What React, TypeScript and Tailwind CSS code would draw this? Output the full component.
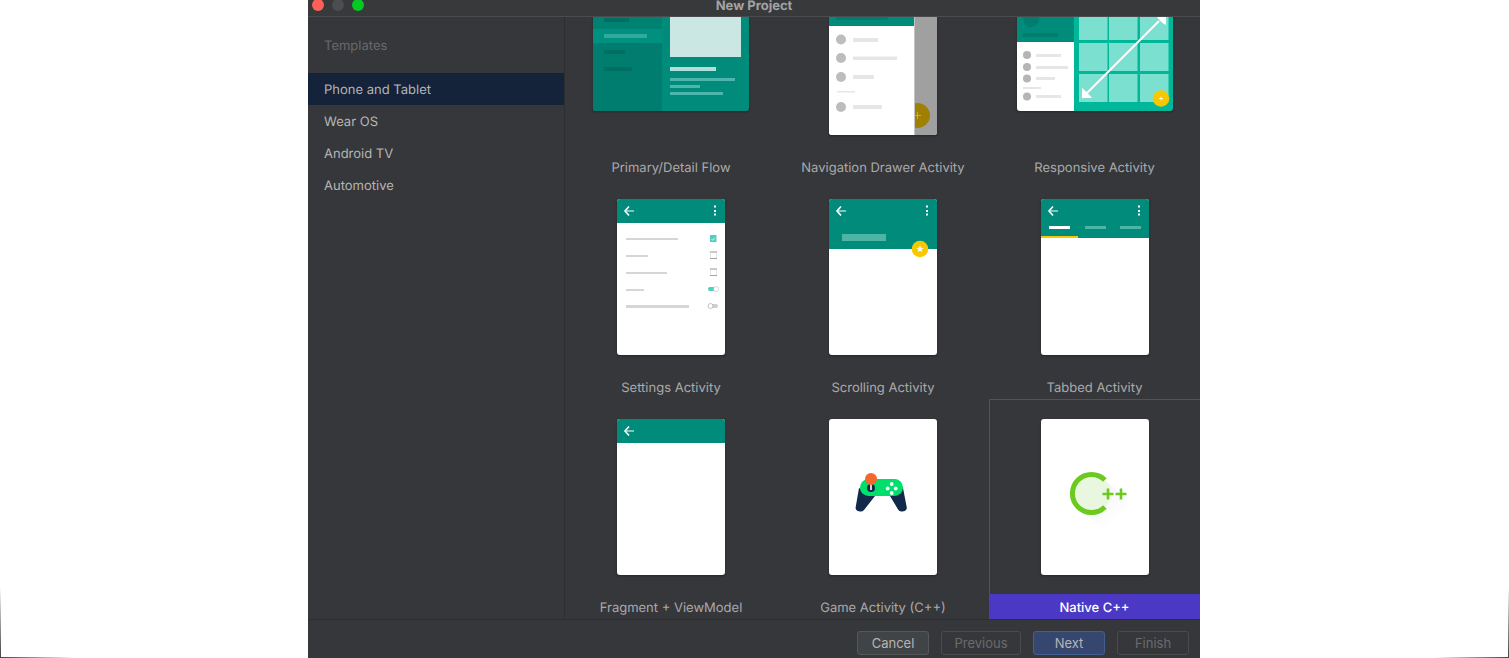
import type { ReactNode } from "react";

const TEAL = "#008b7a";
const YELLOW = "#f7c800";

// top row of the grid is scrolled under the title bar
const categories = ["Phone and Tablet", "Wear OS", "Android TV", "Automotive"];

const Arrow = () => (
  <g>
    <path d="M8 12h9" stroke="#80c5bc" strokeWidth="2" />
    <path d="M12 7.500 8 12l4 4.500" fill="none" stroke="#fff" strokeWidth="1.600" />
  </g>
);

const Kebab = () => (
  <g fill="#fff">
    <rect x="97" y="6.500" width="2" height="2" />
    <rect x="97" y="11" width="2" height="2" />
    <rect x="97" y="14.500" width="2" height="2" />
  </g>
);

const Phone = ({ children }: { children: ReactNode }) => (
  <svg width="108" height="156" viewBox="0 0 108 156" className="block rounded-[3px] bg-white">
    {children}
  </svg>
);

const Wide = ({ view, children }: { view: string; children: ReactNode }) => (
  <svg width="156" height="108" viewBox={view} className="block rounded-[3px]">
    {children}
  </svg>
);

const EmptyBox = ({ y }: { y: number }) => (
  <g>
    <rect x="93.500" y={y} width="6" height="6.500" fill="none" stroke="#e2e2e2" strokeWidth="0.800" />
    <path d={`M93 ${y}h7M93 ${y + 6.5}h7`} stroke="#9a9a9a" strokeWidth="0.900" />
  </g>
);

const PrimaryDetail = () => (
  <Wide view="593 3 156 108">
    <rect x="593" y="3" width="156" height="108" fill={TEAL} />
    <rect x="593" y="3" width="69" height="108" fill="#007d6e" />
    <rect x="593" y="3" width="69" height="26" fill="#008272" />
    <rect x="593" y="29" width="69" height="14" fill="#009080" />
    <rect x="604" y="18" width="25" height="4" fill="#006e60" />
    <rect x="604" y="34" width="43" height="4" fill="#33a99b" />
    <rect x="604" y="50" width="21" height="4" fill="#006e60" />
    <rect x="604" y="67" width="28" height="4" fill="#006e60" />
    <rect x="670" y="3" width="71" height="54" fill="#cbe7e4" />
    <rect x="670" y="67" width="46" height="4" fill="#b2dfdb" />
    <rect x="670" y="78" width="65" height="3" fill="#4db6ac" />
    <rect x="670" y="85" width="30" height="3" fill="#4db6ac" />
    <rect x="670" y="92" width="53" height="3" fill="#4db6ac" />
  </Wide>
);

const NavDrawer = () => (
  <Phone>
    <rect x="85" width="23" height="156" fill="#a0a0a0" />
    <circle cx="88.500" cy="136.500" r="12.500" fill="#a08000" />
    <path d="M88.500 133v7M85 136.500h7" stroke="#c9b566" strokeWidth="0.800" />
    <rect width="85" height="156" fill="#fff" />
    <rect x="85" width="1" height="156" fill="#c4c4c4" />
    <rect width="85" height="47" fill={TEAL} />
    <rect x="7" y="37" width="52" height="4" fill="#007d6e" />
    {[60.5, 79, 98, 128].map((y) => (
      <circle key={y} cx="12" cy={y} r="5" fill="#bdbdbd" />
    ))}
    <rect x="24" y="59" width="25" height="4" fill="#e6e6e6" />
    <rect x="24" y="77.500" width="44" height="3.500" fill="#e6e6e6" />
    <rect x="24" y="96" width="21" height="4" fill="#e6e6e6" />
    <rect x="8" y="112" width="18" height="1.500" fill="#e6e6e6" />
    <rect x="24" y="126" width="29" height="4" fill="#e6e6e6" />
  </Phone>
);

const Responsive = () => {
  const cols = [1079, 1109, 1140];
  const rows = [12, 43, 74];
  return (
    <Wide view="1017 3 156 108">
      <rect x="1017" y="3" width="57" height="108" fill="#fff" />
      <rect x="1017" y="3" width="57" height="39" fill={TEAL} />
      <circle cx="1031" cy="19" r="8" fill="#007d6e" />
      <rect x="1023" y="33" width="35" height="4" fill="#007d6e" />
      {[55, 67, 78.5, 96.5].map((y) => (
        <circle key={y} cx="1027" cy={y} r="4" fill="#b5b5b5" />
      ))}
      <rect x="1036" y="54" width="25" height="3" fill="#e6e6e6" />
      <rect x="1036" y="66" width="32" height="3" fill="#e6e6e6" />
      <rect x="1036" y="77" width="19" height="3" fill="#e6e6e6" />
      <rect x="1023" y="87" width="18" height="2" fill="#e6e6e6" />
      <rect x="1036" y="95" width="25" height="3" fill="#e6e6e6" />
      <rect x="1074" y="3" width="99" height="108" fill="#00b899" />
      {rows.map((y) =>
        cols.map((x) => <rect key={`${x}-${y}`} x={x} y={y} width="28.500" height="28" fill="#7be0cf" />)
      )}
      <path d="M1159 21 1086 94" stroke="#fff" strokeWidth="2" />
      <path d="M1166 15h-10l2 3.500 4.500 4.500 3.500 2zM1082 98h10l-2.500-3-4.500-4.500-3-2.500z" fill="#fff" />
      <circle cx="1161" cy="98.500" r="8.300" fill={YELLOW} />
      <path d="M1161 96.500v4M1159 98.500h4" stroke="#fff" strokeWidth="0.800" />
    </Wide>
  );
};

const Settings = () => (
  <Phone>
    <rect width="108" height="24" fill={TEAL} />
    <Arrow />
    <Kebab />
    <g fill="#d6d6d6">
      <rect x="9" y="39" width="52" height="2" />
      <rect x="9" y="56" width="22" height="2" />
      <rect x="9" y="73" width="41" height="2" />
      <rect x="9" y="90" width="18" height="2" />
      <rect x="9" y="106" width="63" height="3" />
    </g>
    <rect x="93" y="36" width="6.500" height="7" fill="#4dd0bd" />
    <path d="m94.500 40 1.300 1.300 2.300-2.600" fill="none" stroke="#fff" strokeWidth="0.700" />
    <EmptyBox y={53} />
    <EmptyBox y={70} />
    <rect x="91" y="88" width="8" height="4" rx="2" fill="#4dd0bd" />
    <circle cx="99" cy="90" r="2.500" fill="#fff" stroke="#bbb" strokeWidth="0.600" />
    <rect x="93" y="105" width="8" height="4" rx="2" fill="#cfcfcf" />
    <circle cx="93.500" cy="107" r="2.500" fill="#fff" stroke="#999" strokeWidth="0.600" />
  </Phone>
);

const Scrolling = () => (
  <Phone>
    <rect width="108" height="50" fill={TEAL} />
    <Arrow />
    <Kebab />
    <rect x="13" y="35" width="44" height="7" fill="#4db5a6" />
    <circle cx="91" cy="50" r="8.300" fill={YELLOW} />
    <path d="m91 46.500 1 2.300 2.500.2-1.900 1.600.6 2.400-2.200-1.300-2.200 1.300.6-2.400-1.900-1.600 2.500-.2z" fill="#fff" />
  </Phone>
);

const Tabbed = () => (
  <Phone>
    <rect width="108" height="39" fill={TEAL} />
    <Arrow />
    <Kebab />
    <rect x="8" y="27" width="21" height="3" fill="#fff" />
    <rect x="44" y="27" width="21" height="3" fill="#4db5a6" />
    <rect x="79" y="27" width="21" height="3" fill="#4db5a6" />
    <rect y="37" width="37" height="2" fill={YELLOW} />
  </Phone>
);

const Fragment = () => (
  <Phone>
    <rect width="108" height="24" fill={TEAL} />
    <Arrow />
  </Phone>
);

const Game = () => (
  <Phone>
    <path d="M30 69 26.700 88q-.5 3 2 4l2.300.5q2.500.3 4-1.500l11-14zM74 69l3.700 19q.5 3-2 4l-2.300.5q-2.500.3-4-1.500L61 77z" fill="#13294b" />
    <rect x="31" y="60" width="43" height="17" rx="8.500" fill="#00de6c" />
    <circle cx="42" cy="69" r="4" fill="#13294b" />
    <rect x="41.200" y="64" width="1.600" height="7" fill="#fff" />
    <circle cx="42" cy="60" r="6" fill="#f4672d" />
    <g fill="#fff">
      <circle cx="62.700" cy="65" r="1.900" />
      <circle cx="62.700" cy="74" r="1.900" />
      <circle cx="58.700" cy="69.500" r="1.900" />
      <circle cx="66.700" cy="69.500" r="1.900" />
    </g>
  </Phone>
);

const NativeCpp = () => (
  <Phone>
    <defs>
      <linearGradient id="cppShade" x1="0" y1="0" x2="1" y2="1">
        <stop offset="0" stopColor="#efefef" />
        <stop offset="0.7" stopColor="#ffffff" />
      </linearGradient>
    </defs>
    <path d="M36 90 65 62l32 28-24 26z" fill="url(#cppShade)" />
    <circle cx="50.500" cy="74.500" r="19" fill="#e9f6e0" />
    <path d="M63.900 61.100A19 19 0 1 0 63.900 87.900" fill="none" stroke="#6cc91f" strokeWidth="5" />
    <path d="M61.500 75h11M67 69.500v11M74.500 75h11M80 69.500v11" stroke="#6cc91f" strokeWidth="2.600" />
  </Phone>
);

const templates = [
  { name: "Primary/Detail Flow", art: <PrimaryDetail /> },
  { name: "Navigation Drawer Activity", art: <NavDrawer /> },
  { name: "Responsive Activity", art: <Responsive /> },
  { name: "Settings Activity", art: <Settings /> },
  { name: "Scrolling Activity", art: <Scrolling /> },
  { name: "Tabbed Activity", art: <Tabbed /> },
  { name: "Fragment + ViewModel", art: <Fragment /> },
  { name: "Game Activity (C++)", art: <Game /> },
  { name: "Native C++", art: <NativeCpp />, selected: true },
];

const App = () => {
  return (
    <div className="relative h-[658px] w-[1509px] overflow-hidden bg-white font-['Inter',sans-serif] text-[13px] leading-4 [text-rendering:geometricPrecision]">
      <div className="absolute bottom-0 left-0 h-px w-[75px] bg-gradient-to-r from-[#444] to-white" />
      <div className="absolute bottom-0 left-0 h-[70px] w-px bg-gradient-to-t from-[#444] to-white" />
      <div className="absolute bottom-0 right-0 h-px w-[75px] bg-gradient-to-l from-[#444] to-white" />
      <div className="absolute bottom-0 right-0 h-[70px] w-px bg-gradient-to-t from-[#444] to-white" />

      <div className="ml-[308px] flex h-full w-[892px] flex-col bg-[#36373a]">
        {/* title bar */}
        <div className="relative z-10 flex h-[17px] shrink-0 justify-center border-b border-[#4a4b4d] bg-[#38393b]">
          <div className="absolute left-[4px] top-[-1px] flex gap-2">
            <span className="h-3 w-3 rounded-full bg-[#fe5f57]" />
            <span className="h-3 w-3 rounded-full bg-[#4c4d51]" />
            <span className="h-3 w-3 rounded-full bg-[#04c923]" />
          </div>
          <span className="h-[12px] font-bold leading-[12px] text-[#a3a3a3]">New Project</span>
        </div>

        <div className="flex min-h-0 flex-1">
          <aside className="w-[257px] shrink-0 border-r border-[#2d2e30]">
            <div className="px-4 pb-5 pt-[21px] text-[#68696b]">Templates</div>
            <ul className="mt-[-1px] text-[#b4b5b7]">
              {categories.map((c, i) => (
                <li key={c} className={`flex h-8 items-center px-4 pt-px ${i === 0 ? "bg-[#14233a]" : ""}`}>
                  {c}
                </li>
              ))}
            </ul>
          </aside>

          <main className="min-w-0 flex-1 overflow-hidden">
            <div className="mt-[-57px] grid grid-cols-[212px_212px_211px] auto-rows-[220px]">
              {templates.map((t) => (
                <div
                  key={t.name}
                  className={`flex flex-col items-center pt-[19px] ${
                    t.selected ? "shadow-[inset_1px_0_0_#4b3fd0,0_-1px_0_#4b3fd0]" : ""
                  }`}
                >
                  <div className="flex h-[156px] items-center">
                    <div className="shadow-[0_1px_2px_rgba(0,0,0,0.3)]">{t.art}</div>
                  </div>
                  <div
                    className={`mt-[19px] flex h-[25px] w-full items-center justify-center pt-[2px] ${
                      t.selected ? "bg-[#4b39c6] font-medium text-white" : "text-[#a9aaac]"
                    }`}
                  >
                    {t.name}
                  </div>
                </div>
              ))}
            </div>
          </main>
        </div>

        {/* footer */}
        <div className="relative z-10 flex h-[39px] shrink-0 items-start justify-end gap-3 border-t border-[#2d2e30] bg-[#36373a] pr-[11px] pt-[11px]">
          <button className="h-6 w-[72px] rounded-[3px] border border-[#55585a] bg-[#414446] text-[#b4b5b7]">Cancel</button>
          <button className="h-6 w-20 rounded-[3px] border border-[#4a4b4d] text-[#6a6b6d]">Previous</button>
          <button className="h-6 w-[72px] rounded-[3px] border border-[#42608f] bg-[#37466f] text-[#b4b5b7]">Next</button>
          <button className="h-6 w-[72px] rounded-[3px] border border-[#4a4b4d] text-[#6a6b6d]">Finish</button>
        </div>
      </div>
    </div>
  );
};

export default App;
